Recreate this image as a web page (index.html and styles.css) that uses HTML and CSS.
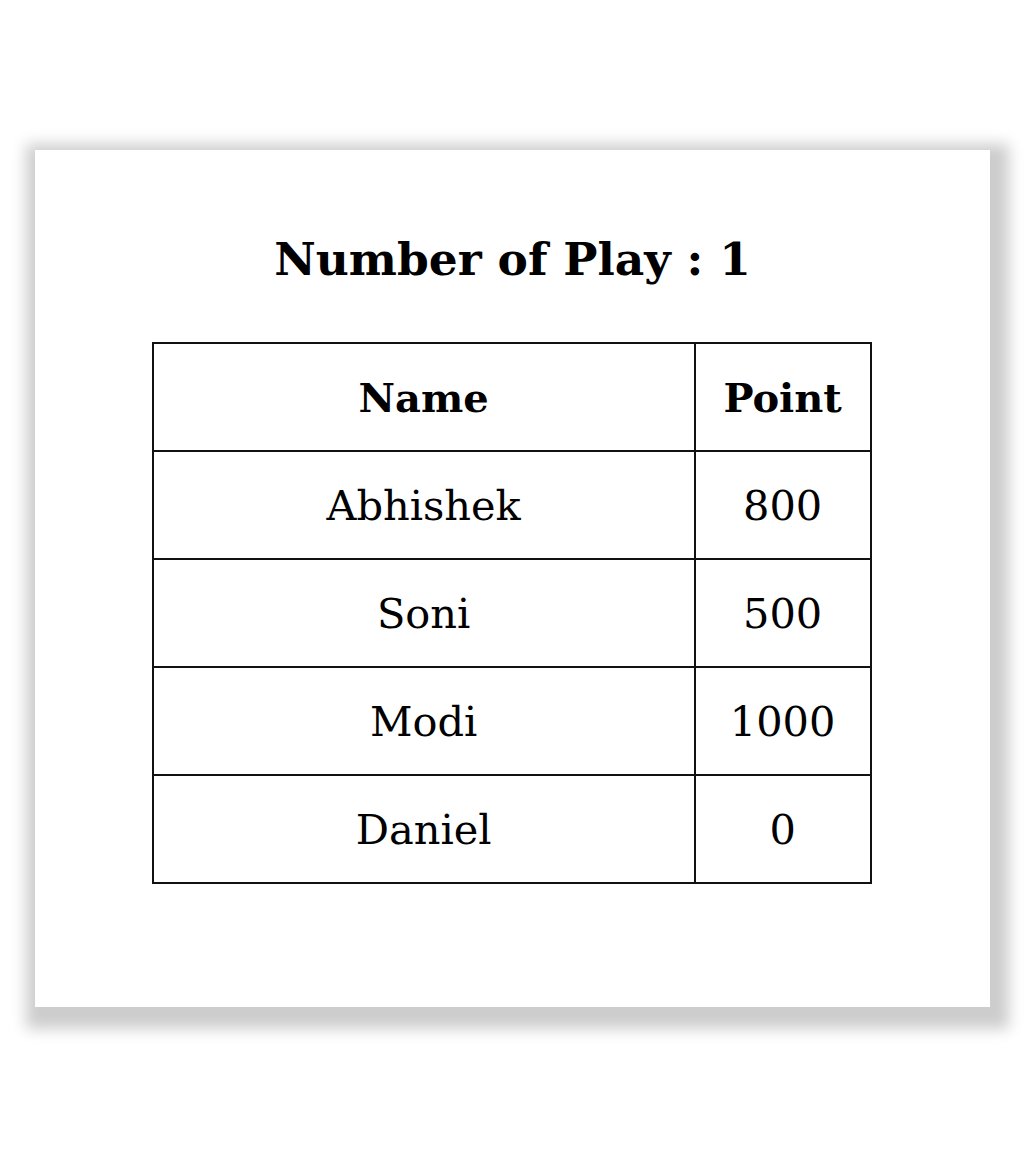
FILE: index.html
```html
<!DOCTYPE html>
<html>
<head>
<meta charset="utf-8">
<link rel="stylesheet" href="styles.css">
</head>
<body>
<div class="page">
  <div class="card">
    <h1 class="title">Number of Play : 1</h1>
    <table class="scores">
      <thead>
        <tr><th class="col-name">Name</th><th class="col-point">Point</th></tr>
      </thead>
      <tbody>
        <tr><td>Abhishek</td><td>800</td></tr>
        <tr><td>Soni</td><td>500</td></tr>
        <tr><td>Modi</td><td>1000</td></tr>
        <tr><td>Daniel</td><td>0</td></tr>
      </tbody>
    </table>
  </div>
</div>
</body>
</html>
```
FILE: styles.css
```css
html, body {
  margin: 0;
  padding: 0;
  background: #ffffff;
}
body {
  font-family: "DejaVu Serif", "Liberation Serif", serif;
  color: #000;
}
.page {
  box-sizing: border-box;
  min-height: 1171px;
  padding: 150px 0 0 35px;
}
.card {
  width: 955px;
  height: 857px;
  box-sizing: border-box;
  background: #fff;
  box-shadow: 5px 8px 14px 14px #cdcdcd;
  padding-top: 86px;
}
.title {
  margin: 0 0 59px;
  text-align: center;
  font-size: 45.5px;
  font-weight: bold;
  line-height: 47px;
}
.scores {
  margin: 0 auto;
  width: 720px;
  border-collapse: collapse;
  transform: translateX(-1px);
}
.scores th, .scores td {
  border: 2px solid #111;
  height: 106px;
  padding: 0;
  text-align: center;
  vertical-align: middle;
  font-size: 41.5px;
}
.scores th {
  font-weight: bold;
  font-size: 40px;
}
.col-name { width: 542px; }
.col-point { width: 174px; }
```
